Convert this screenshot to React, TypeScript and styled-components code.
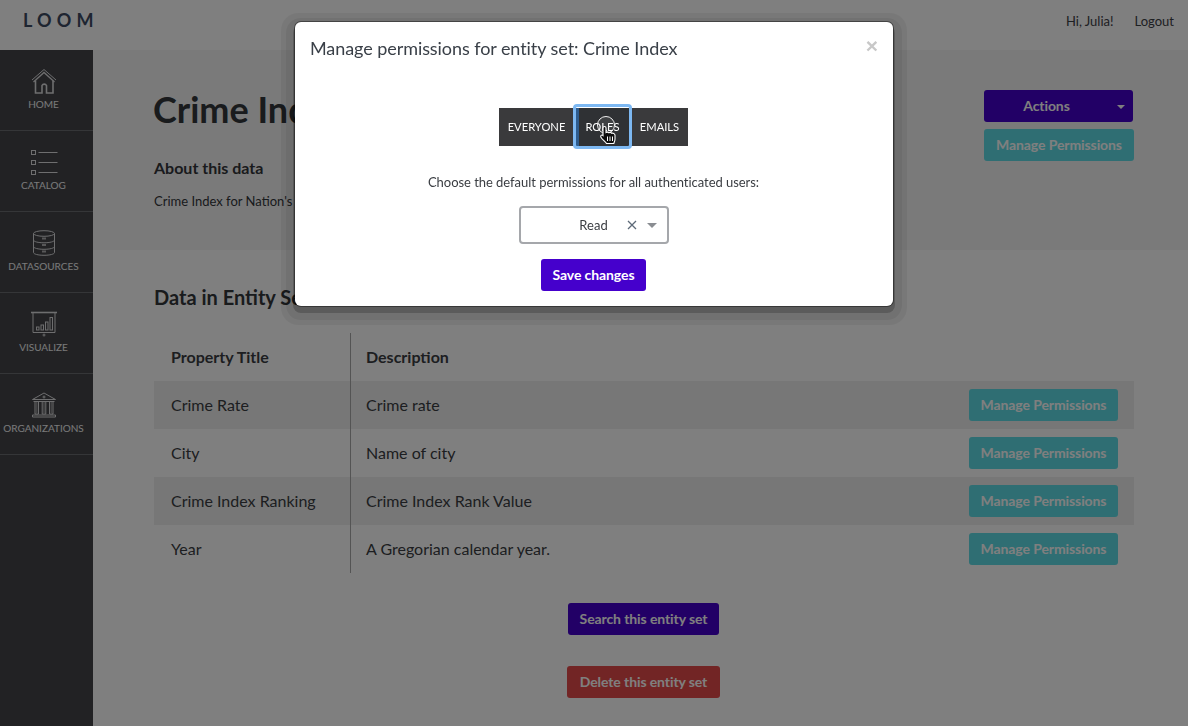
import styled, { createGlobalStyle } from 'styled-components';
import { ReactNode } from 'react';

// ------------------- Styled Components -------------------

const GlobalStyle = createGlobalStyle`
  html, body {
    margin: 0;
    padding: 0;
    height: 100%;
    overflow: hidden;
    font-family: "Lato", "Liberation Sans", sans-serif;
    color: #2e3236;
    background: #fff;
  }
  * { box-sizing: border-box; }
`;

const Page = styled.div`
  width: 1188px;
  height: 726px;
  overflow: hidden;
  display: flex;
  flex-direction: column;
`;

const Header = styled.header`
  height: 50px;
  flex: none;
  display: flex;
  align-items: center;
  justify-content: space-between;
  padding: 0 14px 10px 23px;
  background: #fff;
`;

const Logo = styled.div`
  font-size: 18px;
  font-weight: 700;
  letter-spacing: 5.2px;
  color: #3c4a62;
`;

const UserBox = styled.div`
  display: flex;
  gap: 21px;
  font-size: 13px;
  color: #3c4046;
  margin-top: 1px;
`;

const Body = styled.div`
  flex: 1;
  display: flex;
  min-height: 0;
`;

const Sidebar = styled.nav`
  width: 93px;
  flex: none;
  background: #444549;
`;

const NavItem = styled.div`
  height: 81px;
  display: flex;
  flex-direction: column;
  align-items: center;
  justify-content: flex-start;
  padding: 18px 6px 0 0;
  border-bottom: 1px solid #6a6c70;
  color: #f2f2f4;
  font-size: 10px;
  line-height: 12px;
  svg { display: block; margin-bottom: 4px; }
`;

const Main = styled.main`
  flex: 1;
  min-width: 0;
  background: #fff;
`;

const TopSection = styled.section`
  height: 200px;
  padding: 39px 54px 0 60px;
  background: #f5f5f5;
  display: flex;
  justify-content: space-between;
`;

const Title = styled.h1`
  margin: 0;
  font-size: 36px;
  line-height: 40px;
  font-weight: 700;
  color: #33363a;
`;

const SubTitle = styled.h2`
  margin: 29px 0 0 1px;
  font-size: 16px;
  line-height: 20px;
  font-weight: 700;
  color: #33363a;
`;

const Text = styled.p`
  margin: 15px 0 0 1px;
  font-size: 13px;
  line-height: 16px;
  color: #33363a;
`;

const ActionColumn = styled.div`
  width: 150px;
  margin-top: 1px;
  display: flex;
  flex-direction: column;
  gap: 7px;
`;

const Button = styled.div<{ $tone: 'purple' | 'teal' | 'red'; $width: number }>`
  position: relative;
  width: ${({ $width }) => $width}px;
  height: 32px;
  padding-bottom: 2px;
  display: flex;
  align-items: center;
  justify-content: center;
  border-radius: 3px;
  font-size: 14px;
  font-weight: 700;
  letter-spacing: -0.1px;
  color: #fff;
  background: ${({ $tone }) => ($tone === 'purple' ? '#4500cc' : $tone === 'teal' ? '#5fdde6' : '#e54b4b')};
`;

const ActionsLabel = styled.span`
  margin-right: 24px;
`;

const Caret = styled.span<{ $color: string; $size: number }>`
  width: 0;
  height: 0;
  border-left: ${({ $size }) => $size}px solid transparent;
  border-right: ${({ $size }) => $size}px solid transparent;
  border-top: ${({ $size }) => $size}px solid ${({ $color }) => $color};
`;

const ActionsCaret = styled.span`
  position: absolute;
  right: 8px;
  top: 15px;
  display: flex;
`;

const DataSection = styled.section`
  padding: 34px 54px 0 61px;
`;

const DataTitle = styled.h2`
  margin: 0 0 23px;
  font-size: 20px;
  line-height: 26px;
  font-weight: 700;
  color: #33363a;
`;

const Table = styled.div`
  width: 980px;
  display: flex;
  flex-direction: column;
`;

const Row = styled.div<{ $striped?: boolean }>`
  height: 48px;
  display: grid;
  grid-template-columns: 197px 1fr auto;
  align-items: stretch;
  padding-right: 16px;
  background: ${({ $striped }) => ($striped ? '#eeeeee' : 'transparent')};
`;

const TitleCell = styled.div<{ $bold?: boolean }>`
  display: flex;
  align-items: center;
  padding: 0 0 2px 17px;
  border-right: 1px solid #a8a8a8;
  font-size: 16px;
  font-weight: ${({ $bold }) => ($bold ? 700 : 400)};
  color: #3a3d42;
`;

const DescCell = styled.div<{ $bold?: boolean }>`
  display: flex;
  align-items: center;
  padding: 0 0 2px 15px;
  font-size: 16px;
  font-weight: ${({ $bold }) => ($bold ? 700 : 400)};
  color: #3a3d42;
`;

const ButtonCell = styled.div`
  display: flex;
  align-items: center;
`;

const BottomActions = styled.div`
  display: flex;
  flex-direction: column;
  align-items: center;
  gap: 31px;
  margin-top: 30px;
  width: 979px;
`;

const Overlay = styled.div`
  position: fixed;
  inset: 0;
  background: rgba(0, 0, 0, 0.5);
`;

const Modal = styled.div`
  position: absolute;
  left: 295px;
  top: 22px;
  width: 598px;
  height: 284px;
  background: #fff;
  border-radius: 6px;
  box-shadow:
    0 0 0 1px rgba(0, 0, 0, 0.4),
    0 5px 0 2px rgba(0, 0, 0, 0.2),
    0 5px 0 9px rgba(0, 0, 0, 0.06),
    0 5px 0 14px rgba(0, 0, 0, 0.05);
`;

const ModalTitle = styled.h3`
  margin: 0;
  padding: 16px 15px 0;
  font-size: 18px;
  line-height: 20px;
  font-weight: 400;
  letter-spacing: -0.07px;
  color: #3a4048;
`;

const CloseButton = styled.span`
  position: absolute;
  right: 15px;
  top: 14px;
  font-family: "Liberation Sans", sans-serif;
  font-size: 21px;
  line-height: 20px;
  font-weight: 700;
  color: #c8c8c8;
`;

const ModalBody = styled.div`
  display: flex;
  flex-direction: column;
  align-items: center;
  padding: 50px 1px 0 0;
`;

const Tabs = styled.div`
  display: flex;
  height: 38px;
  background: #3a3a3c;
`;

const Tab = styled.div<{ $active?: boolean; $width: number }>`
  position: relative;
  width: ${({ $width }) => $width}px;
  padding-bottom: 2px;
  display: flex;
  align-items: center;
  justify-content: center;
  font-size: 11.2px;
  color: #fff;
  background: ${({ $active }) => ($active ? '#2f3134' : 'transparent')};
  ${({ $active }) =>
      $active
          ? `
    box-shadow: inset 5px 0 0 #2e5c8e;
    &::after {
      content: '';
      position: absolute;
      left: -1px;
      right: -1px;
      top: -4px;
      bottom: -3px;
      border: 3px solid #7db8f2;
      border-radius: 4px;
    }`
          : ''}
`;

const Prompt = styled.p`
  margin: 28px 0 0;
  font-size: 13px;
  line-height: 16px;
  letter-spacing: -0.04px;
  color: #3a3d42;
`;

const Select = styled.div`
  position: relative;
  width: 150px;
  height: 38px;
  margin-top: 16px;
  display: flex;
  align-items: center;
  justify-content: center;
  border: 2px solid #a5a7ab;
  border-radius: 4px;
  font-size: 13px;
  color: #3a3d42;
`;

const SelectControls = styled.span`
  position: absolute;
  right: 10px;
  top: 12px;
  display: flex;
  align-items: center;
  gap: 10px;
  svg { display: block; }
`;

const SaveButton = styled(Button)`
  margin-top: 15px;
`;

const Cursor = styled.svg`
  position: absolute;
  left: 596px;
  top: 115px;
`;

// ------------------- Icons -------------------

const IconBase = ({ children, width = 36, height = 36 }: { children: ReactNode; width?: number; height?: number }) => (
    <svg width={width} height={height} viewBox={`0 0 ${width} ${height}`} fill="none" stroke="#dcdcde" strokeWidth="1">
        {children}
    </svg>
);

const HomeIcon = () => (
    <IconBase width={26} height={26}>
        <path d="M1 12 13 1.500 25 12" />
        <path d="M2.500 14 13 4.500 23.500 14" strokeWidth="1.300" />
        <path d="M4.500 12.500v12.500h6.500v-7.500a2.500 2.500 0 0 1 4.500 0V25H22V12.500" strokeWidth="1.600" />
    </IconBase>
);

const CatalogIcon = () => (
    <IconBase width={28} height={26}>
        <rect x="1.500" y="1.500" width="4" height="4" />
        <rect x="1.500" y="11.500" width="4" height="4" />
        <rect x="1.500" y="21.500" width="4" height="4" />
        <path d="M8.500 3.500h19M8.500 13.500h19M8.500 23.500h19" />
    </IconBase>
);

const DatasourcesIcon = () => (
    <IconBase width={24} height={26}>
        <ellipse cx="12" cy="3.500" rx="10.500" ry="2.800" />
        <path d="M1.500 3.500v19c0 1.600 4.700 2.800 10.500 2.800s10.500-1.200 10.500-2.800v-19" />
        <path d="M1.500 10c0 1.600 4.700 2.800 10.500 2.800S22.500 11.600 22.500 10M1.500 16.500c0 1.600 4.700 2.800 10.500 2.800s10.500-1.200 10.500-2.800" />
        <path d="M10 7.500h4v2h-4zM10 14h4v2h-4zM10 20.500h4v2h-4z" fill="#b0b0b2" stroke="none" />
    </IconBase>
);

const VisualizeIcon = () => (
    <IconBase width={28} height={26}>
        <path d="M1 1.500h26" strokeWidth="1.600" />
        <path d="M3 2v19.500h22V2" />
        <rect x="6.500" y="16" width="2.500" height="3" />
        <rect x="11" y="14" width="2.500" height="5" />
        <rect x="15.500" y="11" width="2.500" height="8" />
        <rect x="20" y="6.500" width="2.500" height="12.500" />
        <circle cx="14" cy="24" r="1.500" fill="#b0b0b2" stroke="none" />
    </IconBase>
);

const OrganizationsIcon = () => (
    <IconBase width={26} height={26}>
        <path d="M13 1 1.500 7.500h23z" />
        <circle cx="13" cy="5" r="1" />
        <path d="M2.500 9.500h21" />
        <path d="M4 10v12h3.500V10M11.200 10v12h3.600V10M18.500 10v12H22V10" />
        <path d="M5 10h1.500v12H5zM12.200 10h1.600v12h-1.600zM19.500 10H21v12h-1.500z" fill="#8a8a8c" stroke="none" />
        <path d="M1.500 23h23v2h-23z" />
    </IconBase>
);

const ClearIcon = () => (
    <svg width="10" height="10" viewBox="0 0 10 10" stroke="#5d6a78" strokeWidth="1.300">
        <path d="M1 1l8 8M9 1l-8 8" />
    </svg>
);

const HandCursor = () => (
    <Cursor width="26" height="32" viewBox="0 0 26 32">
        <circle cx="10" cy="10" r="8.500" fill="rgba(255,255,255,0.08)" stroke="#eeeeee" strokeWidth="1" />
        <path
            d="M7 13c0-2 3-2 3 0v4.500c1-.5 2.300-.4 2.800.3 1-.5 2.300-.3 2.800.5 1.100-.4 3.400 0 3.400 1.900v3.800c0 2.200-1 3.300-1.200 4.500H10.500c-.5-1.200-4.500-4.300-5.600-6.300-.8-1.500.8-2.800 2.100-1.700z"
            fill="#0c0c0c"
            stroke="#ffffff"
            strokeWidth="1.100"
        />
        <path d="M11.500 21.500v4.500M14 21.500v4.500M16.500 21.500v4.500" stroke="#ffffff" strokeWidth="1" />
    </Cursor>
);

// ------------------- Data -------------------

const NAV_ITEMS = [
    { label: 'HOME', icon: <HomeIcon /> },
    { label: 'CATALOG', icon: <CatalogIcon /> },
    { label: 'DATASOURCES', icon: <DatasourcesIcon /> },
    { label: 'VISUALIZE', icon: <VisualizeIcon /> },
    { label: 'ORGANIZATIONS', icon: <OrganizationsIcon /> },
];

const PROPERTIES = [
    { title: 'Crime Rate', description: 'Crime rate' },
    { title: 'City', description: 'Name of city' },
    { title: 'Crime Index Ranking', description: 'Crime Index Rank Value' },
    { title: 'Year', description: 'A Gregorian calendar year.' },
];

// ------------------- App Component -------------------

export default function App() {
    return (
        <Page>
            <GlobalStyle />
            <Header>
                <Logo>LOOM</Logo>
                <UserBox>
                    <span>Hi, Julia!</span>
                    <span>Logout</span>
                </UserBox>
            </Header>
            <Body>
                <Sidebar>
                    {NAV_ITEMS.map(item => (
                        <NavItem key={item.label}>
                            {item.icon}
                            {item.label}
                        </NavItem>
                    ))}
                </Sidebar>
                <Main>
                    <TopSection>
                        <div>
                            <Title>Crime Index</Title>
                            <SubTitle>About this data</SubTitle>
                            <Text>Crime Index for Nation's Cities</Text>
                        </div>
                        <ActionColumn>
                            <Button $tone="purple" $width={149}>
                                <ActionsLabel>Actions</ActionsLabel>
                                <ActionsCaret>
                                    <Caret $color="#fff" $size={4} />
                                </ActionsCaret>
                            </Button>
                            <Button $tone="teal" $width={150}>
                                Manage Permissions
                            </Button>
                        </ActionColumn>
                    </TopSection>
                    <DataSection>
                        <DataTitle>Data in Entity Set</DataTitle>
                        <Table>
                            <Row>
                                <TitleCell $bold>Property Title</TitleCell>
                                <DescCell $bold>Description</DescCell>
                            </Row>
                            {PROPERTIES.map((property, index) => (
                                <Row key={property.title} $striped={index % 2 === 0}>
                                    <TitleCell>{property.title}</TitleCell>
                                    <DescCell>{property.description}</DescCell>
                                    <ButtonCell>
                                        <Button $tone="teal" $width={149}>
                                            Manage Permissions
                                        </Button>
                                    </ButtonCell>
                                </Row>
                            ))}
                        </Table>
                        <BottomActions>
                            <Button $tone="purple" $width={151}>
                                Search this entity set
                            </Button>
                            <Button $tone="red" $width={153}>
                                Delete this entity set
                            </Button>
                        </BottomActions>
                    </DataSection>
                </Main>
            </Body>
            <Overlay />
            <Modal>
                <ModalTitle>Manage permissions for entity set: Crime Index</ModalTitle>
                <CloseButton>×</CloseButton>
                <ModalBody>
                    <Tabs>
                        <Tab $width={75}>EVERYONE</Tab>
                        <Tab $width={57} $active>
                            ROLES
                        </Tab>
                        <Tab $width={57}>EMAILS</Tab>
                    </Tabs>
                    <Prompt>Choose the default permissions for all authenticated users:</Prompt>
                    <Select>
                        Read
                        <SelectControls>
                            <ClearIcon />
                            <Caret $color="#8a8d92" $size={5} />
                        </SelectControls>
                    </Select>
                    <SaveButton $tone="purple" $width={105}>
                        Save changes
                    </SaveButton>
                </ModalBody>
            </Modal>
            <HandCursor />
        </Page>
    );
}
